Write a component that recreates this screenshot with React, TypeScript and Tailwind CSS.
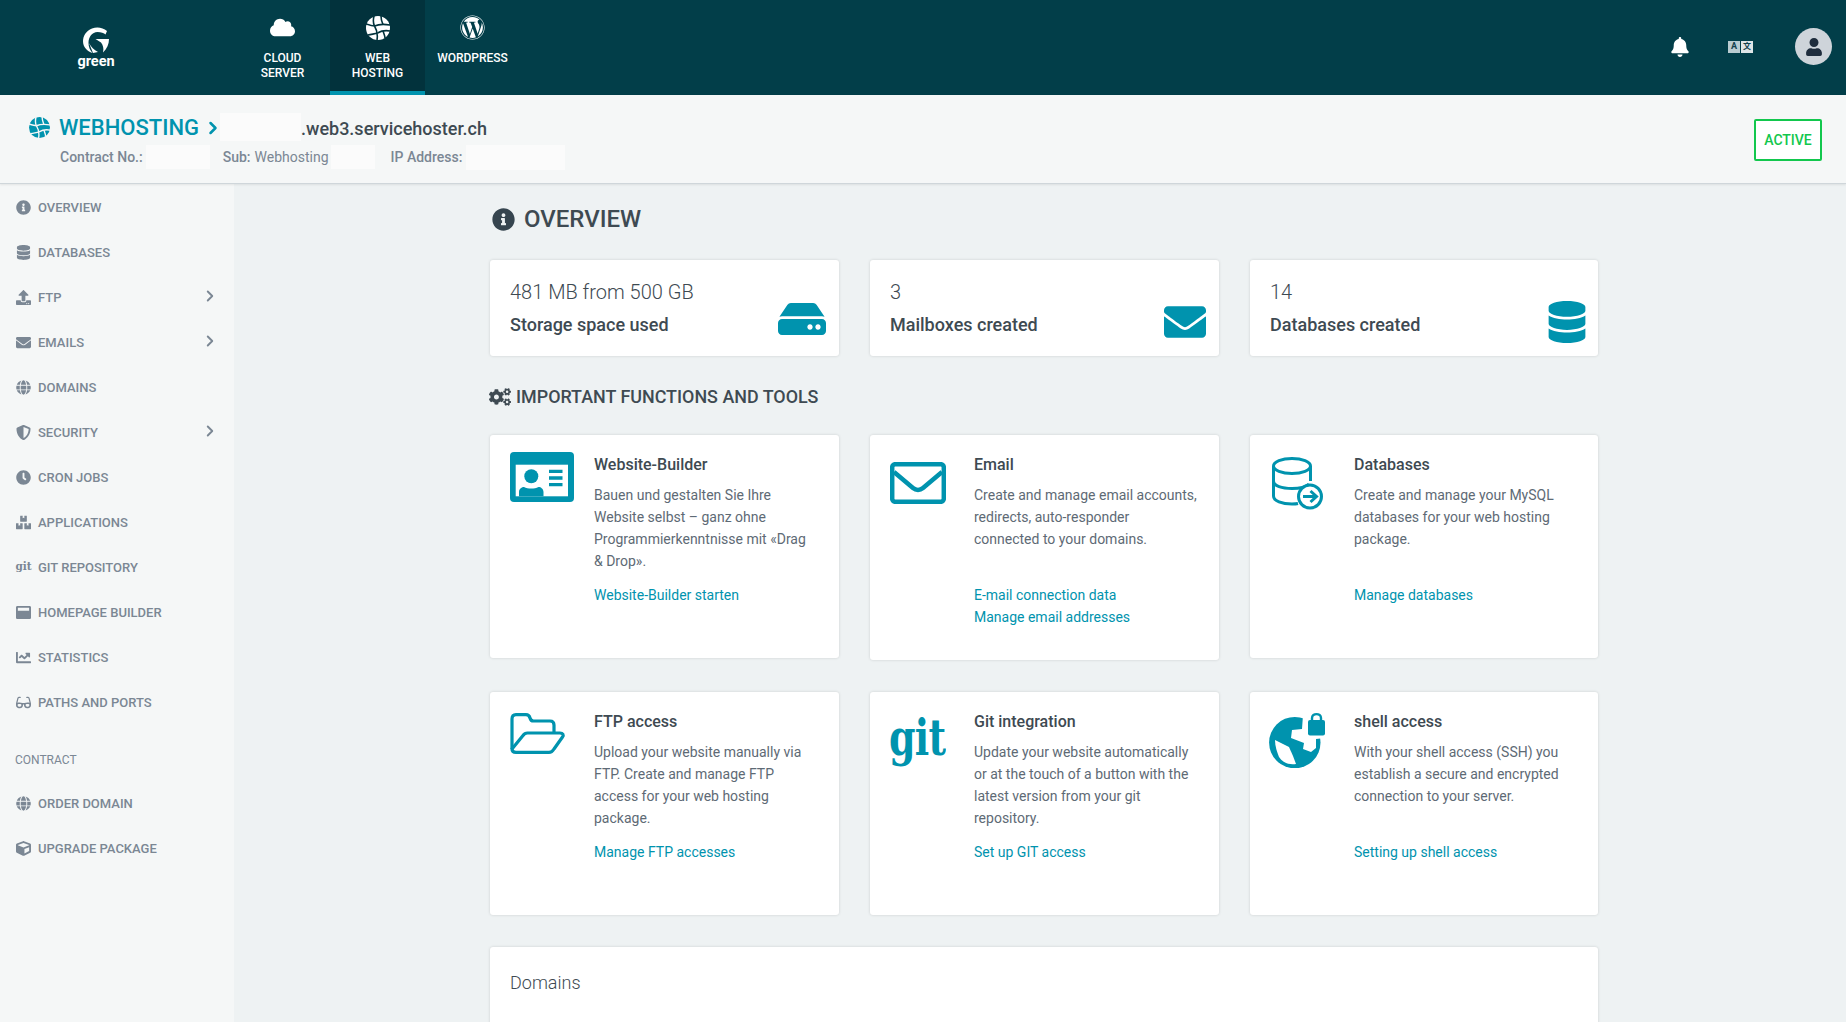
import React from 'react';
import {
    FaBell, FaBoxes, FaChartLine, FaClock, FaCloud, FaCogs, FaCube, FaDatabase, FaEnvelope,
    FaGlasses, FaGlobe, FaHdd, FaInfoCircle, FaShieldAlt, FaUpload, FaUser, FaWindowMaximize, FaWordpress
} from 'react-icons/fa';
import { ChevronRight } from 'lucide-react';

const HostingGlobe = ({ size, color, line }: { size: number; color: string; line: string }) => (
    <svg width={size} height={size} viewBox="0 0 24 24" className="shrink-0">
        <circle cx="12" cy="12" r="12" fill={color} />
        <g fill="none" stroke={line} strokeWidth="1.6">
            <path d="M8 0 C7 4 7 7 8.500 10" />
            <path d="M0 8 C3 9 6 10 8.500 10" />
            <path d="M8.500 10 C11 14 12 18 11 24" />
            <path d="M8.500 10 C13 8 18 8 24 9" />
            <path d="M15 0 C15 4 16 6 17 8.500" />
            <path d="M2 19 C6 18 9 18 11.500 17" />
            <path d="M11.500 17 C15 15 19 14 24 15" />
            <path d="M17 15 C18 18 19 20 19 22" />
        </g>
    </svg>
);

const Logo = () => (
    <svg width="26" height="26" viewBox="0 0 26 26" fill="white">
        <path d="M24 4 C20 0.500 14 -0.500 9 1.500 C3 4 0 9 0 14 C0 20 4 24 9.500 26 C7 23 5.500 20 5.500 16 C5.500 10 9 5 14.500 5 C18 5 21 6 22.500 7.500 Z" />
        <path d="M12.500 12 H26 C26 17 24 22 20 25.500 C21 21.500 20 18 18 15.500 L12.500 12 Z" />
        <path d="M6 16 C8 20 11 23 15 25 L10 26 Z" />
    </svg>
);

const TranslateIcon = () => (
    <div className="flex gap-[1px] font-['Roboto','Noto_Sans_CJK_SC',sans-serif] font-bold text-[#12414c]">
        <span className="flex h-[12px] w-[12px] items-center justify-center bg-[#b9cbd0] text-[9px] leading-none">A</span>
        <span className="flex h-[12px] w-[12px] items-center justify-center bg-[#dfe6e8] text-[8px] leading-none">文</span>
    </div>
);

const BuilderIcon = () => (
    <svg width="64" height="50" viewBox="0 0 64 50">
        <rect width="64" height="50" rx="4" fill="#0093ae" />
        <rect x="5.700" y="12.700" width="52.300" height="31.600" fill="white" />
        <circle cx="21.300" cy="24.300" r="7" fill="#0093ae" />
        <path d="M9 44.300 V40 C9 36.500 12 35 14 35 C18 37 24.500 37 28.500 35 C31 35 33.500 37 33.500 40 V44.300 Z" fill="#0093ae" />
        <path d="M39 17.700 H52.500 V21 H39 Z M39 24.300 H52.500 V27.700 H39 Z M39 31 H52.500 V34.300 H39 Z" fill="#0093ae" />
    </svg>
);

const MailIcon = () => (
    <svg width="56" height="42" viewBox="0 0 56 42" fill="none" stroke="#0093ae" strokeWidth="4.500">
        <rect x="2.200" y="2.200" width="51.600" height="37.600" rx="3" />
        <path d="M4 10 L23 26 C26 28.500 30 28.500 33 26 L52 10" />
    </svg>
);

const FolderIcon = () => (
    <svg width="56" height="41" viewBox="0 0 56 41" fill="none" stroke="#0093ae" strokeWidth="3.200" strokeLinejoin="round">
        <path d="M2 36 V6 C2 3 3.500 1.600 6 1.600 H16 C18.500 1.600 19.500 3 20 5 C20.500 7 21.500 8 23.500 8 H40 C42.500 8 44 9.500 44 12 V20" />
        <path d="M2 36 L13 22.500 C14 21 15.500 20 17.500 20 H50 C53 20 54 22 52.500 24 L44 36 C42.500 38.500 41 39.400 39 39.400 H6 C3.500 39.400 2 38 2 36 Z" />
    </svg>
);

const DatabaseLineIcon = () => (
    <svg width="51" height="53" viewBox="0 0 51 53" fill="none" stroke="#0093ae" strokeWidth="3">
        <ellipse cx="20" cy="9" rx="18.500" ry="7.500" />
        <path d="M1.500 9 V39 C1.500 44 10 47 20 47 C22 47 24 47 26 46.500" />
        <path d="M38.500 9 V24" />
        <path d="M1.500 24 C1.500 29 10 31.500 20 31.500 C27 31.500 34 30 37 27" />
        <circle cx="38" cy="39.500" r="11.500" fill="white" />
        <path d="M31 39.500 H44 M38.500 34 L44.500 39.500 L38.500 45" />
    </svg>
);

const ShellIcon = () => (
    <svg width="56" height="56" viewBox="0 0 56 56">
        <circle cx="25.800" cy="30.600" r="25.700" fill="#0093ae" />
        <path d="M34 3 L33 17 L23 18 L22 26 L35 31 L34 37 L42 40 L47 36 L47 27 L56 26 V0 H34 Z" fill="white" />
        <path d="M6 28 L20 35 L24 44 L27 52 C20 53 14 51 10 45 C8 40 6 34 6 28 Z" fill="white" />
        <rect x="39" y="8" width="17" height="15.500" rx="2" fill="#0093ae" />
        <path d="M43 9 V6 C43 0.800 52 0.800 52 6 V9" fill="none" stroke="#0093ae" strokeWidth="2.400" />
    </svg>
);

const GitIcon = () => (
    <span className="-ml-[1px] mt-[6px] block w-[56px] origin-left scale-x-[0.76] font-['DejaVu_Serif',serif] text-[50px] leading-[46px] font-bold tracking-[-1px] text-[#0093ae]">git</span>
);

const sidebarItems = [
    { label: 'OVERVIEW', icon: <FaInfoCircle size={15} /> },
    { label: 'DATABASES', icon: <FaDatabase size={15} /> },
    { label: 'FTP', icon: <FaUpload size={15} />, sub: true },
    { label: 'EMAILS', icon: <FaEnvelope size={15} />, sub: true },
    { label: 'DOMAINS', icon: <FaGlobe size={15} /> },
    { label: 'SECURITY', icon: <FaShieldAlt size={15} />, sub: true },
    { label: 'CRON JOBS', icon: <FaClock size={15} /> },
    { label: 'APPLICATIONS', icon: <FaBoxes size={17} /> },
    { label: 'GIT REPOSITORY', icon: <span className="mb-[3px] font-['DejaVu_Serif',serif] text-[10.5px] leading-none font-bold">git</span> },
    { label: 'HOMEPAGE BUILDER', icon: <FaWindowMaximize size={15} /> },
    { label: 'STATISTICS', icon: <FaChartLine size={15} /> },
    { label: 'PATHS AND PORTS', icon: <FaGlasses size={17} /> },
];

const contractItems = [
    { label: 'ORDER DOMAIN', icon: <FaGlobe size={15} /> },
    { label: 'UPGRADE PACKAGE', icon: <FaCube size={15} /> },
];

const SidebarItem = ({ label, icon, sub }: { label: string; icon: React.ReactNode; sub?: boolean }) => (
    <div className="flex h-[45px] items-center pl-[16px] pr-[15px] text-[13px] font-medium text-[#7b8794]">
        <span className="flex w-[15px] shrink-0 justify-center">{icon}</span>
        <span className="ml-[7px] flex-1">{label}</span>
        {sub && <ChevronRight size={18} strokeWidth={2.500} className="mb-[3px]" />}
    </div>
);

const StatCard = ({ value, label, icon }: { value: string; label: string; icon: React.ReactNode }) => (
    <div className="flex h-[96px] items-end justify-between rounded-[3px] bg-white pb-[13px] pl-[20px] pr-[13px] shadow-[0_0_3px_rgba(0,0,0,0.15)]">
        <div className="self-start pt-[20px]">
            <p className="text-[20px] leading-[24px] font-light text-[#3e4a52]">{value}</p>
            <p className="mt-[9px] text-[18px] leading-[24px] font-medium text-[#3e4a52]">{label}</p>
        </div>
        {icon}
    </div>
);

interface ToolCardProps {
    title: string;
    icon: React.ReactNode;
    desc: React.ReactNode;
    links: string[];
    height: string;
}

const ToolCard = ({ title, icon, desc, links, height }: ToolCardProps) => (
    <div className={`flex rounded-[3px] bg-white pl-[20px] pr-[18px] shadow-[0_0_3px_rgba(0,0,0,0.15)] ${height}`}>
        <div className="w-[84px] shrink-0 pt-[17px]">{icon}</div>
        <div className="pt-[19px]">
            <p className="text-[16px] leading-[22px] font-medium text-[#3e4a52]">{title}</p>
            <p className="mt-[8px] min-h-[88px] text-[14px] leading-[22px] text-[#5e6a75]">{desc}</p>
            <div className="mt-[12px] text-[14px] leading-[22px] text-[#0093ae]">
                {links.map((link) => <p key={link}>{link}</p>)}
            </div>
        </div>
    </div>
);

const NavItem = ({ icon, lines, active }: { icon: React.ReactNode; lines: string[]; active?: boolean }) => (
    <div className={`flex h-[95px] w-[95px] flex-col items-center pt-[14px] ${active ? 'border-b-4 border-[#0093ae] bg-[#02323c]' : ''}`}>
        <div className="flex h-[26px] items-center">{icon}</div>
        <div className="mt-[11px] text-center text-[12px] leading-[15px] font-medium text-white">
            {lines.map((line) => <p key={line}>{line}</p>)}
        </div>
    </div>
);

const App = () => {
    return (
        <div className="flex h-[1022px] w-full flex-col overflow-hidden bg-[#eef2f3] font-['Roboto',sans-serif]">
            <header className="flex h-[95px] shrink-0 items-start bg-[#023e49]">
                <div className="flex w-[192px] flex-col items-center pt-[27px]">
                    <Logo />
                    <span className="text-[14.500px] leading-[17px] font-bold text-white">green</span>
                </div>
                <nav className="ml-[43px] flex">
                    <NavItem icon={<FaCloud size={25} color="white" />} lines={['CLOUD', 'SERVER']} />
                    <NavItem icon={<span className="pt-[2px]"><HostingGlobe size={24} color="white" line="#02323c" /></span>} lines={['WEB', 'HOSTING']} active />
                    <NavItem icon={<FaWordpress size={25} color="white" />} lines={['WORDPRESS']} />
                </nav>
                <div className="ml-auto flex h-[95px] items-center pb-[2px] pr-[14px]">
                    <FaBell size={20} color="white" />
                    <div className="ml-[38px] mr-[42px]"><TranslateIcon /></div>
                    <div className="flex h-[37px] w-[37px] items-center justify-center rounded-full bg-[#ced4da]">
                        <FaUser size={18} color="#1f2d3d" />
                    </div>
                </div>
            </header>

            <div className="z-10 flex h-[89px] shrink-0 items-start justify-between border-b border-[#cfd6da] bg-[#f5f7f7] pl-[29px] pr-[24px] pt-[18px] shadow-[0_1px_2px_rgba(0,0,0,0.08)]">
                <div>
                    <div className="flex h-[28px] items-center">
                        <HostingGlobe size={21} color="#0093ae" line="#f5f7f7" />
                        <span className="ml-[9px] pt-[1px] text-[22px] font-medium text-[#0093ae]">WEBHOSTING</span>
                        <ChevronRight size={20} strokeWidth={3} color="#0093ae" className="ml-[4px] mt-[2px]" />
                        <span className="-ml-[3px] h-[28px] w-[81px] bg-[#fbfbfb]" />
                        <span className="pt-[2px] text-[18px] font-medium text-[#3e4a52]">.web3.servicehoster.ch</span>
                    </div>
                    <div className="ml-[31px] mt-[4px] flex h-[24px] items-center text-[14px] text-[#7b8794]">
                        <span className="font-medium">Contract No.:</span>
                        <span className="ml-[3px] h-[24px] w-[64px] bg-[#fbfbfb]" />
                        <span className="ml-[13px] font-medium">Sub:</span>
                        <span className="ml-[4px]">Webhosting</span>
                        <span className="ml-[2px] h-[24px] w-[44px] bg-[#fbfbfb]" />
                        <span className="ml-[16px] font-medium">IP Address:</span>
                        <span className="ml-[4px] h-[25px] w-[99px] bg-[#fbfbfb]" />
                    </div>
                </div>
                <div className="mt-[6px] flex h-[42px] w-[68px] items-center justify-center rounded-[2px] border-2 border-[#12c74d] bg-white text-[14px] font-medium text-[#12c74d]">
                    ACTIVE
                </div>
            </div>

            <div className="flex min-h-0 flex-1">
                <aside className="w-[234px] shrink-0 bg-[#f5f7f7] pt-[1px]">
                    {sidebarItems.map((item) => <SidebarItem key={item.label} {...item} />)}
                    <div className="flex h-[56px] items-center pl-[15px] pt-[13px] text-[12px] text-[#7b8794]">CONTRACT</div>
                    {contractItems.map((item) => <SidebarItem key={item.label} {...item} />)}
                </aside>

                <main className="ml-[256px] w-[1108px] shrink-0">
                    <div className="mt-[21px] flex h-[28px] items-center">
                        <FaInfoCircle size={23} color="#36454f" className="ml-[2px]" />
                        <h1 className="ml-[9px] text-[24px] font-medium text-[#3e4a52]">OVERVIEW</h1>
                    </div>

                    <div className="mt-[27px] grid grid-cols-[349px_349px_348px] gap-x-[31px]">
                        <StatCard value="481 MB from 500 GB" label="Storage space used" icon={<FaHdd size={48} color="#0093ae" />} />
                        <StatCard value="3" label="Mailboxes created" icon={<FaEnvelope size={42} color="#0093ae" />} />
                        <StatCard value="14" label="Databases created" icon={<FaDatabase size={42} color="#0093ae" className="-mr-[3px]" />} />
                    </div>

                    <div className="mt-[29px] flex h-[24px] items-center">
                        <FaCogs size={22} color="#3e4a52" className="-ml-[1px]" />
                        <h2 className="ml-[5px] text-[17.900px] font-medium text-[#3e4a52]">IMPORTANT FUNCTIONS AND TOOLS</h2>
                    </div>

                    <div className="mt-[26px] grid grid-cols-[349px_349px_348px] items-start gap-x-[31px]">
                        <ToolCard
                            title="Website-Builder"
                            icon={<BuilderIcon />}
                            desc={<>Bauen und gestalten Sie Ihre Website selbst – ganz ohne Programmierkenntnisse mit «Drag<br />&amp; Drop».</>}
                            links={['Website-Builder starten']}
                            height="h-[223px]"
                        />
                        <ToolCard
                            title="Email"
                            icon={<div className="pt-[10px]"><MailIcon /></div>}
                            desc={<>Create and manage email accounts, redirects, auto-responder<br />connected to your domains.</>}
                            links={['E-mail connection data', 'Manage email addresses']}
                            height="h-[225px]"
                        />
                        <ToolCard
                            title="Databases"
                            icon={<div className="ml-[2px] mt-[5px]"><DatabaseLineIcon /></div>}
                            desc="Create and manage your MySQL databases for your web hosting package."
                            links={['Manage databases']}
                            height="h-[223px]"
                        />
                    </div>

                    <div className="mt-[32px] grid grid-cols-[349px_349px_348px] gap-x-[31px]">
                        <ToolCard
                            title="FTP access"
                            icon={<div className="pt-[4px]"><FolderIcon /></div>}
                            desc="Upload your website manually via FTP. Create and manage FTP access for your web hosting package."
                            links={['Manage FTP accesses']}
                            height="h-[223px]"
                        />
                        <ToolCard
                            title="Git integration"
                            icon={<GitIcon />}
                            desc="Update your website automatically or at the touch of a button with the latest version from your git repository."
                            links={['Set up GIT access']}
                            height="h-[223px]"
                        />
                        <ToolCard
                            title="shell access"
                            icon={<div className="-ml-[1px] mt-[3px]"><ShellIcon /></div>}
                            desc="With your shell access (SSH) you establish a secure and encrypted connection to your server."
                            links={['Setting up shell access']}
                            height="h-[223px]"
                        />
                    </div>

                    <div className="mt-[32px] h-[120px] rounded-[3px] bg-white pl-[20px] pt-[24px] shadow-[0_0_3px_rgba(0,0,0,0.15)]">
                        <p className="text-[18px] leading-[24px] font-light text-[#3e4a52]">Domains</p>
                    </div>
                </main>
            </div>
        </div>
    );
};

export default App;
